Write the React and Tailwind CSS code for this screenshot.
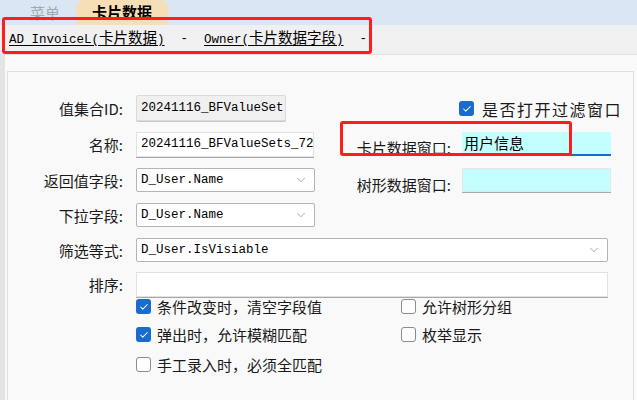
import { ChevronDown, Check } from 'lucide-react'

const cjk = '"Noto Sans CJK SC", "Microsoft YaHei", sans-serif'

const Box = ({ checked }) =>
  checked ? (
    <span className="flex h-[15px] w-[15px] shrink-0 items-center justify-center rounded-[3px] bg-[#1a6ccc]">
      <Check className="h-[10px] w-[10px] text-white" strokeWidth={2.5} />
    </span>
  ) : (
    <span className="h-[15px] w-[15px] shrink-0 rounded-[3px] border border-[#8c8c8c] bg-[#fdfdfd]" />
  )

const CheckRow = ({ checked, label, className = '', textClass = 'text-[15px]' }) => (
  <div className={`flex items-center gap-[6px] ${className}`}>
    <Box checked={checked} />
    <span className={`leading-none text-[#1a1a1a] ${textClass}`}>{label}</span>
  </div>
)

const Label = ({ children, className = '' }) => (
  <span className={`text-right text-[15px] leading-none text-[#1a1a1a] ${className}`}>{children}</span>
)

const Field = ({ value, className = '', select = false, readOnly = false }) => (
  <div
    className={`flex items-center justify-between border pl-[4px] pr-[6px] font-['Liberation_Mono',monospace] text-[12.5px] text-black ${
      select
        ? 'h-[24px] rounded-[2px] border-[#b4b4b4] bg-white'
        : readOnly
        ? 'h-[26px] rounded-[2px] border-[#dadada] bg-[#f0f0f0] shadow-[0_1px_0_#c8c8c8]'
        : 'h-[25px] border-[#e2e2e2] bg-white shadow-[0_1px_0_#a8a8a8]'
    } ${className}`}
  >
    <span>{value}</span>
    {select && <ChevronDown className="h-[14px] w-[14px] text-[#8a8a8a]" strokeWidth={1.25} />}
  </div>
)

export default function App() {
  return (
    <div
      className="relative flex h-[400px] w-[637px] flex-col overflow-hidden bg-[#f9f9f9]"
      style={{ fontFamily: cjk }}
    >
      {/* tab strip */}
      <div className="flex h-[25px] items-center bg-[#dae6f3] pl-[30px]">
        <span className="text-[15px] leading-none text-[#a3a9b0]">菜单</span>
        <div className="ml-[16px] flex h-[25px] w-[92px] items-center justify-center rounded-t-[8px] bg-[#f6dfb6] text-[15px] font-bold text-black">
          卡片数据
        </div>
      </div>

      {/* breadcrumb bar */}
      <div className="flex h-[30px] items-center gap-[16px] border-b border-[#e2e2e2] bg-[#f0f0f0] pl-[9px] font-['Liberation_Mono','Noto_Sans_CJK_SC',monospace] text-[12.5px] text-black">
        <span className="underline underline-offset-2">
          AD InvoiceL(<span className="text-[14.5px]">卡片数据</span>)
        </span>
        <span>-</span>
        <span className="underline underline-offset-2">
          Owner(<span className="text-[14.5px]">卡片数据字段</span>)
        </span>
        <span>-</span>
      </div>

      {/* body */}
      <div className="flex flex-1 border-l-[5px] border-[#e4e4e4] pt-[16px] pl-[2px] pr-[3px]">
        <div className="flex-1 border-l border-r border-t border-[#e0e0e0]">
          <div className="flex pt-[23px]">
            <div className="flex w-[307px] flex-col">
              <div className="flex items-center">
                <Label className="w-[115px]">值集合ID:</Label>
                <Field readOnly value="20241116_BFValueSet" className="ml-[13px] w-[150px]" />
              </div>
              <div className="mt-[11px] flex items-center">
                <Label className="w-[115px]">名称:</Label>
                <Field value="20241116_BFValueSets_72" className="ml-[13px] w-[178px]" />
              </div>
              <div className="mt-[11px] flex items-center">
                <Label className="w-[115px]">返回值字段:</Label>
                <Field select value="D_User.Name" className="ml-[13px] w-[179px]" />
              </div>
            </div>
            <div className="flex flex-col">
              <CheckRow
                checked
                label="是否打开过滤窗口"
                textClass="text-[16px] tracking-[1.5px]"
                className="ml-[144px] mt-[4px] h-[19px] gap-[8px]"
              />
              <div className="mt-[14px] flex items-center">
                <Label className="mt-[6px] w-[136px]">卡片数据窗口:</Label>
                <div className="ml-[11px] flex h-[24px] w-[149px] items-center border-b-2 border-[#1a6ccc] bg-[#c4ffff] pl-[2px] text-[15px] text-black">
                  用户信息
                </div>
              </div>
              <div className="mt-[12px] flex items-center">
                <Label className="mt-[8px] w-[136px]">树形数据窗口:</Label>
                <div className="ml-[11px] h-[24px] w-[149px] border border-[#e6e6e6] bg-[#c4ffff] shadow-[0_1px_0_#a8a8a8]" />
              </div>
            </div>
          </div>

          <div className="mt-[11px] flex items-center">
            <Label className="w-[115px]">下拉字段:</Label>
            <Field select value="D_User.Name" className="ml-[13px] w-[179px]" />
          </div>
          <div className="mt-[11px] flex items-center">
            <Label className="w-[115px]">筛选等式:</Label>
            <Field select value="D_User.IsVisiable" className="ml-[13px] w-[472px]" />
          </div>
          <div className="mt-[10px] flex items-center">
            <Label className="w-[115px]">排序:</Label>
            <Field value="" className="ml-[13px] w-[472px]" />
          </div>

          <div className="ml-[128px] mt-[2px] grid w-[420px] grid-cols-[265px_1fr] gap-y-[13px]">
            <CheckRow checked label="条件改变时，清空字段值" />
            <CheckRow label="允许树形分组" />
            <CheckRow checked label="弹出时，允许模糊匹配" />
            <CheckRow label="枚举显示" />
            <CheckRow label="手工录入时，必须全匹配" className="mt-[2px]" />
          </div>
        </div>
      </div>

      {/* red highlight overlays */}
      <div className="pointer-events-none absolute left-[2px] top-[17px] h-[37px] w-[370px] rounded-[3px] border-[3px] border-[#ff1c1c]" />
      <div className="pointer-events-none absolute left-[340px] top-[121px] h-[35px] w-[232px] rounded-[3px] border-[3px] border-[#ff1c1c]" />
    </div>
  )
}
